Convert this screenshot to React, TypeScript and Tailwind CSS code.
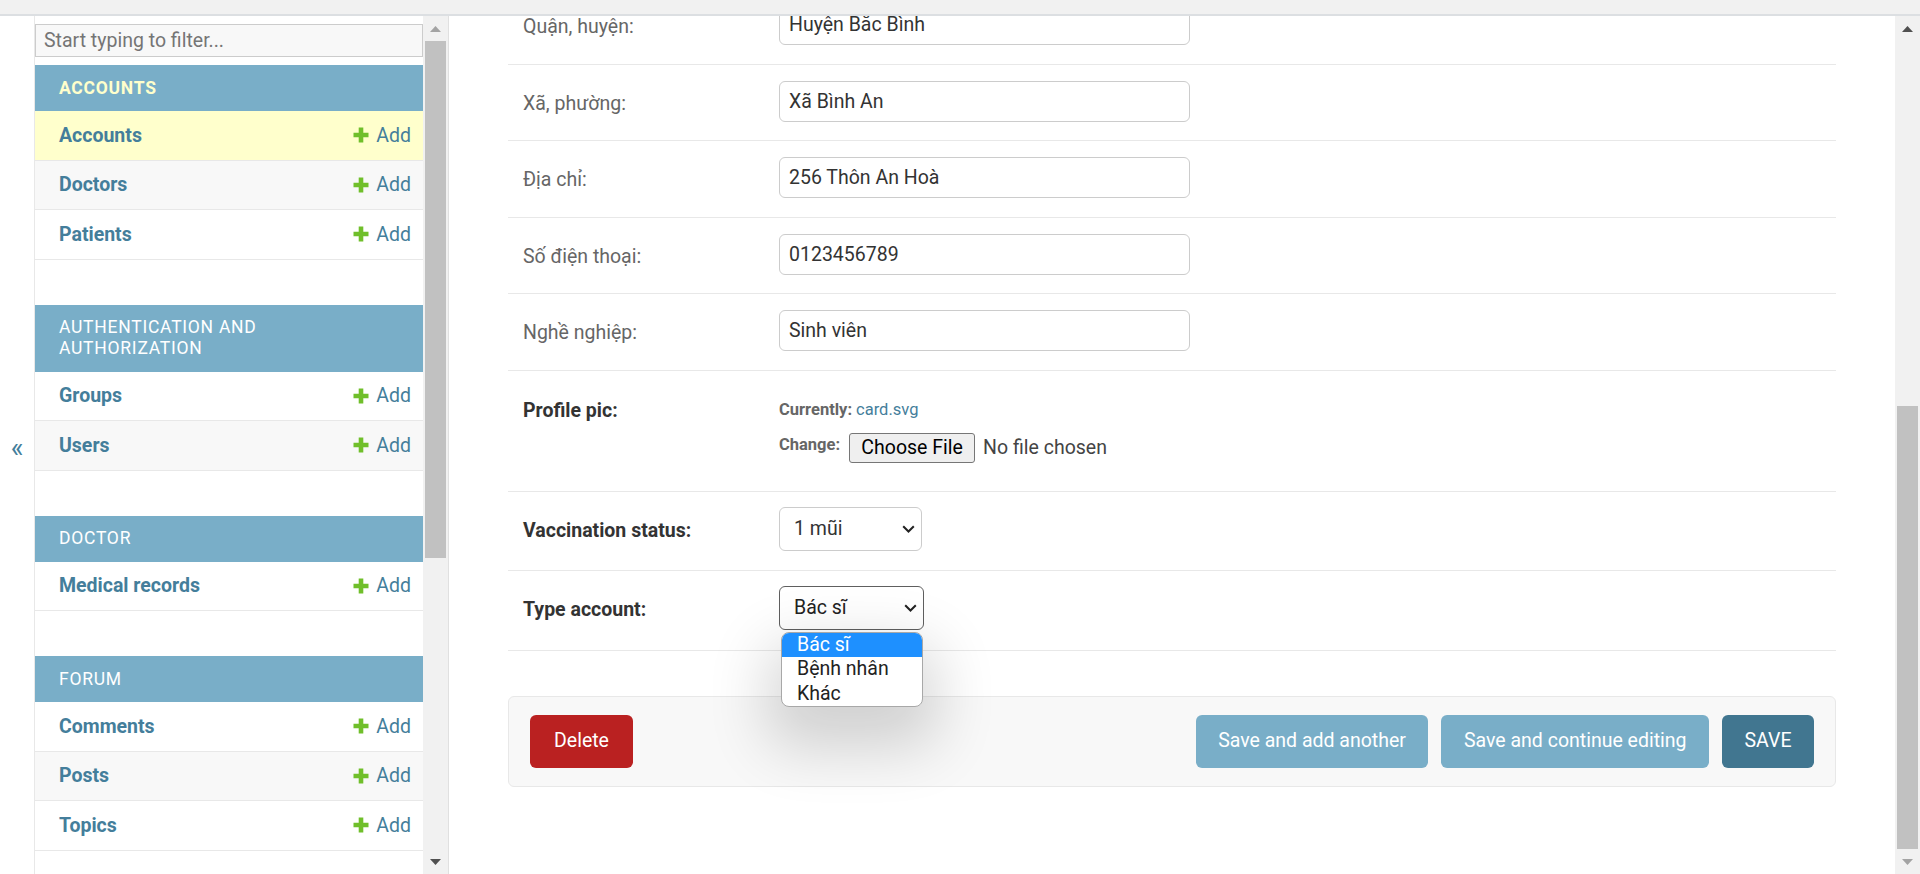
import React from "react"

type Mod = { title: string[]; current?: boolean; models: string[] }

const modules: Mod[] = [
	{ title: ["ACCOUNTS"], current: true, models: ["Accounts", "Doctors", "Patients"] },
	{ title: ["AUTHENTICATION AND", "AUTHORIZATION"], models: ["Groups", "Users"] },
	{ title: ["DOCTOR"], models: ["Medical records"] },
	{ title: ["FORUM"], models: ["Comments", "Posts", "Topics"] },
]

const textFields = [
	{ label: "Quận, huyện:", value: "Huyện Bắc Bình" },
	{ label: "Xã, phường:", value: "Xã Bình An" },
	{ label: "Địa chỉ:", value: "256 Thôn An Hoà" },
	{ label: "Số điện thoại:", value: "0123456789" },
	{ label: "Nghề nghiệp:", value: "Sinh viên" },
]

function PlusIcon() {
	return (
		<svg width="16" height="16" viewBox="0 0 16 16" className="shrink-0">
			<path d="M5.7 0.5h4.6v5.2h5.2v4.6h-5.2v5.2H5.7v-5.2H0.5V5.7h5.2z" fill="#70bf2b" />
		</svg>
	)
}

function Chevron() {
	return (
		<svg width="13" height="8" viewBox="0 0 13 8" className="shrink-0">
			<path d="M1.2 1.2l5.3 5.3 5.3-5.3" fill="none" stroke="#222" strokeWidth="2" />
		</svg>
	)
}

function Arrow({ up, dark }: { up?: boolean; dark?: boolean }) {
	return (
		<div className="h-[25px] shrink-0 flex items-center justify-center">
			<svg width="11" height="6" viewBox="0 0 11 6">
				<polygon points={up ? "0,6 11,6 5.5,0" : "0,0 11,0 5.5,6"} fill={dark ? "#505050" : "#a3a3a3"} />
			</svg>
		</div>
	)
}

function SidebarModule({ mod }: { mod: Mod }) {
	return (
		<div className="mb-[45px]">
			<div
				className={
					"bg-[#79aec8] pl-[24px] py-[12.5px] text-[17.5px] leading-[21px] tracking-[0.75px] " +
					(mod.current ? "text-[#ffffcc] font-bold" : "text-white")
				}
			>
				{mod.title.map(t => (
					<div key={t}>{t}</div>
				))}
			</div>
			{mod.models.map((m, i) => (
				<div
					key={m}
					className={
						"h-[49.5px] flex items-center justify-between pl-[24px] pr-[12px] border-b border-[#e8e8e8] " +
						(mod.current && i == 0 ? "bg-[#ffffcc]" : i % 2 == 1 ? "bg-[#f8f8f8]" : "bg-white")
					}
				>
					<span className="text-[19.5px] font-bold text-[#447e9b]">{m}</span>
					<span className="flex items-center gap-[7px] text-[19.5px] text-[#447e9b]">
						<PlusIcon />
						Add
					</span>
				</div>
			))}
		</div>
	)
}

function Label({ text, required, className }: { text: string; required?: boolean; className: string }) {
	return (
		<div
			className={
				"w-[256px] shrink-0 text-[19.5px] leading-[24px] " +
				(required ? "font-bold text-[#333]" : "text-[#666]") +
				" " +
				className
			}
		>
			{text}
		</div>
	)
}

export default function App() {
	return (
		<div className="font-['Roboto','Liberation_Sans',sans-serif] w-[1920px] h-[874px] overflow-hidden bg-white flex flex-col">
			<div className="h-[16px] shrink-0 bg-[#f1f1f1] border-b-2 border-[#dcdfe2]" />
			<div className="flex h-[858px]">
				{/* toggle */}
				<div className="w-[35px] shrink-0 border-r border-[#e8e8e8] flex items-center justify-center pt-[6px] text-[#447e9b] text-[27px] leading-none">
					«
				</div>

				{/* sidebar */}
				<aside className="w-[414px] shrink-0 flex border-r border-[#e0e0e0]">
					<div className="w-[388px] overflow-hidden">
						<div className="py-[8px]">
							<input
								placeholder="Start typing to filter..."
								className="w-full h-[33px] bg-[#f8f8f8] border border-[#ccc] px-[8px] text-[19.5px] text-[#333] placeholder:text-[#757575] outline-none"
							/>
						</div>
						{modules.map(mod => (
							<SidebarModule key={mod.title[0]} mod={mod} />
						))}
					</div>
					<div className="w-[25px] shrink-0 bg-[#f1f1f1] flex flex-col">
						<Arrow up />
						<div className="mx-[2px] h-[517px] bg-[#c1c1c1]" />
						<div className="flex-1" />
						<Arrow dark />
					</div>
				</aside>

				{/* content */}
				<main className="flex-1 overflow-hidden px-[59px]">
					<div className="-mt-[28px]">
						{textFields.map(f => (
							<div key={f.label} className="flex items-start pl-[15px] pt-[16px] pb-[18.5px] border-b border-[#e8e8e8]">
								<Label text={f.label} className="mt-[11px]" />
								<input
									readOnly
									value={f.value}
									className="w-[411px] h-[41px] border border-[#ccc] rounded-[6px] px-[9px] text-[19.5px] text-[#333] outline-none"
								/>
							</div>
						))}

						<div className="flex items-start pl-[15px] pt-[28px] pb-[28px] border-b border-[#e8e8e8]">
							<Label text="Profile pic:" required className="" />
							<div className="flex flex-col gap-[10px]">
								<div className="h-[24px] flex items-center text-[16.5px]">
									<span className="font-bold text-[#666]">Currently:</span>
									<span className="ml-[4px] text-[#447e9b]">card.svg</span>
								</div>
								<div className="h-[30px] flex items-center">
									<span className="text-[16.5px] font-bold text-[#666] -mt-[4px]">Change:</span>
									<button className="ml-[9px] h-[30px] w-[126px] bg-[#efefef] border border-[#767676] rounded-[3px] text-[19.5px] text-black leading-none">
										Choose File
									</button>
									<span className="ml-[8px] text-[19.5px] text-[#444]">No file chosen</span>
								</div>
							</div>
						</div>

						<div className="flex items-start pl-[15px] pt-[15px] pb-[19px] border-b border-[#e8e8e8]">
							<Label text="Vaccination status:" required className="mt-[12px]" />
							<div className="w-[143px] h-[44px] border border-[#ccc] rounded-[6px] pl-[14px] pr-[6px] flex items-center justify-between text-[19.5px] text-[#333]">
								<span>1 mũi</span>
								<Chevron />
							</div>
						</div>

						<div className="flex items-start pl-[15px] pt-[15px] pb-[20px] border-b border-[#e8e8e8]">
							<Label text="Type account:" required className="mt-[12px]" />
							<div className="relative">
								<div className="w-[145px] h-[44px] border border-[#5f5f5f] rounded-[6px] pl-[14px] pr-[6px] flex items-center justify-between text-[19.5px] text-[#222]">
									<span>Bác sĩ</span>
									<Chevron />
								</div>
								<div className="absolute z-10 top-[46px] left-[2px] w-[142px] rounded-[8px] border border-[#a8a8a8] bg-white overflow-hidden shadow-[0_26px_60px_14px_rgba(0,0,0,0.16)] text-[19.5px] text-[#222]">
									<div className="h-[24.5px] leading-[24.5px] pl-[15px] bg-[#1e90ff] text-white">Bác sĩ</div>
									<div className="h-[24.5px] leading-[24.5px] pl-[15px]">Bệnh nhân</div>
									<div className="h-[24.5px] leading-[24.5px] pl-[15px]">Khác</div>
								</div>
							</div>
						</div>
					</div>

					<div className="mt-[45px] flex items-center justify-between bg-[#f8f8f8] border border-[#e8e8e8] rounded-[6px] px-[21px] py-[18px]">
						<button className="h-[53px] w-[103px] rounded-[6px] bg-[#ba2121] text-white text-[19.5px]">Delete</button>
						<div className="flex gap-[13px]">
							<button className="h-[53px] px-[22.5px] rounded-[6px] bg-[#79aec8] text-white text-[19.5px]">
								Save and add another
							</button>
							<button className="h-[53px] px-[22.5px] rounded-[6px] bg-[#79aec8] text-white text-[19.5px]">
								Save and continue editing
							</button>
							<button className="h-[53px] px-[22.5px] rounded-[6px] bg-[#417690] text-white text-[19.5px] uppercase">
								Save
							</button>
						</div>
					</div>
				</main>

				{/* page scrollbar */}
				<div className="w-[25px] shrink-0 bg-[#f1f1f1] flex flex-col">
					<Arrow up dark />
					<div className="flex-1" />
					<div className="mx-[2px] h-[443px] bg-[#c1c1c1]" />
					<Arrow />
				</div>
			</div>
		</div>
	)
}
